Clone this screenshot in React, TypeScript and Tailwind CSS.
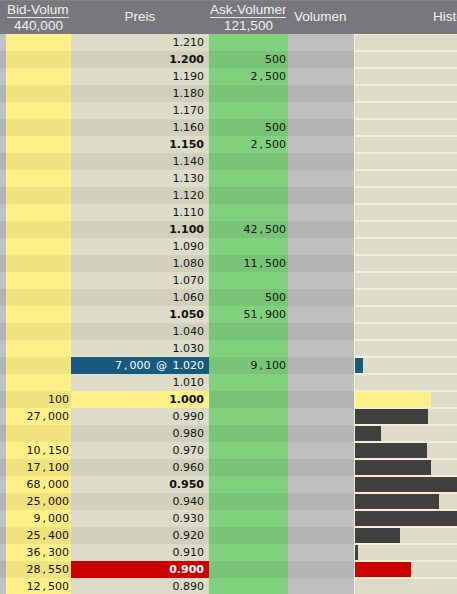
import React from 'react';

type Row = {
  price: string;
  bold?: boolean;
  bid?: string;
  ask?: string;
  hist?: number;
  histColor?: string;
  hi?: 'blue' | 'yellow' | 'red';
};

const rows: Row[] = [
  { price: '1.210' },
  { price: '1.200', bold: true, ask: '500' },
  { price: '1.190', ask: '2,500' },
  { price: '1.180' },
  { price: '1.170' },
  { price: '1.160', ask: '500' },
  { price: '1.150', bold: true, ask: '2,500' },
  { price: '1.140' },
  { price: '1.130' },
  { price: '1.120' },
  { price: '1.110' },
  { price: '1.100', bold: true, ask: '42,500' },
  { price: '1.090' },
  { price: '1.080', ask: '11,500' },
  { price: '1.070' },
  { price: '1.060', ask: '500' },
  { price: '1.050', bold: true, ask: '51,900' },
  { price: '1.040' },
  { price: '1.030' },
  { price: '1.020', hi: 'blue', ask: '9,100', hist: 8, histColor: 'bg-[#175a80]' },
  { price: '1.010' },
  { price: '1.000', bold: true, bid: '100', hi: 'yellow', hist: 76, histColor: 'bg-[#fff087]' },
  { price: '0.990', bid: '27,000', hist: 73 },
  { price: '0.980', hist: 26 },
  { price: '0.970', bid: '10,150', hist: 72 },
  { price: '0.960', bid: '17,100', hist: 76 },
  { price: '0.950', bold: true, bid: '68,000', hist: 102 },
  { price: '0.940', bid: '25,000', hist: 84 },
  { price: '0.930', bid: '9,000', hist: 102 },
  { price: '0.920', bid: '25,400', hist: 45 },
  { price: '0.910', bid: '36,300', hist: 3 },
  { price: '0.900', bold: true, bid: '28,550', hi: 'red', hist: 56, histColor: 'bg-[#cc0000]' },
  { price: '0.890', bid: '12,500' },
];

// Tausender-Komma ist in der Vorlage breiter als der Punkt
function Num({ value }: { value?: string }) {
  if (!value) return null;
  const [a, b] = value.split(',');
  if (b === undefined) return <>{value}</>;
  return (
    <>
      {a}
      <span className="mx-[2px]">,</span>
      {b}
    </>
  );
}

function HeaderSplit({ title, total, width }: { title: string; total: string; width: string }) {
  return (
    <div className={`${width} flex flex-col pl-px`}>
      <div className="h-[18px] mr-[2px] border-b border-[#e4e4e4] overflow-hidden whitespace-nowrap leading-[17px]">
        {title}
      </div>
      <div className="h-[16px] pr-px text-center leading-[15px]">{total}</div>
    </div>
  );
}

function PriceRow({ row, odd }: { row: Row; odd: boolean }) {
  let priceCls = odd ? 'bg-[#d0d0bc] text-[#111]' : 'bg-[#dcdcc8] text-[#111]';
  if (row.hi === 'blue') priceCls = 'bg-[#175a80] text-white';
  if (row.hi === 'yellow') priceCls = 'bg-[#fff087] text-[#111]';
  if (row.hi === 'red') priceCls = 'bg-[#cc0000] text-white';

  return (
    <div className="flex h-[17px] leading-[17px] text-[#111]">
      <div className={`w-[6px] ${odd ? 'bg-[#b4b4b4]' : 'bg-[#c0c0c0]'}`} />
      <div className={`w-[65px] pr-[2px] text-right whitespace-nowrap ${odd ? 'bg-[#f0e27f]' : 'bg-[#fff087]'}`}>
        <Num value={row.bid} />
      </div>
      <div className={`w-[138px] pr-[5px] text-right whitespace-nowrap ${priceCls} ${row.bold ? 'font-bold' : ''}`}>
        {row.hi === 'blue' ? (
          <>
            <Num value="7,000" />
            <span className="mx-[2px]"> @ </span>
            {row.price}
          </>
        ) : (
          row.price
        )}
      </div>
      <div className={`w-[79px] pr-[2px] text-right whitespace-nowrap ${odd ? 'bg-[#78c476]' : 'bg-[#80d07e]'}`}>
        <Num value={row.ask} />
      </div>
      <div className={`w-[66px] ${odd ? 'bg-[#b4b4b4]' : 'bg-[#c0c0c0]'}`} />
      <div className="w-px bg-[#f3efd3]" />
      <div className="w-[102px] border-y border-[#f3efd3] bg-[#dcdcc8]">
        {row.hist ? (
          <div className={`h-full ${row.histColor ?? 'bg-[#404040]'}`} style={{ width: row.hist }} />
        ) : null}
      </div>
    </div>
  );
}

export default function App() {
  return (
    <div
      className="w-[457px] h-[594px] overflow-hidden bg-[#dcdcc8] text-[11px]"
      style={{ fontFamily: '"DejaVu Sans", Verdana, sans-serif' }}
    >
      {/* Kopfzeile */}
      <div
        className="flex h-[34px] bg-[#78787c] text-[13.5px] text-[#f2f2f2] border-t border-[#838386]"
        style={{ fontFamily: '"Liberation Sans", Arial, sans-serif' }}
      >
        <div className="w-[6px]" />
        <HeaderSplit title="Bid-Volumen" total="440,000" width="w-[65px]" />
        <div className="w-[138px] flex items-center justify-center pb-[1px]">Preis</div>
        <HeaderSplit title="Ask-Volumen" total="121,500" width="w-[79px]" />
        <div className="w-[67px] flex items-center pl-[6px] pb-[1px]">Volumen</div>
        <div className="w-[102px] flex items-center pl-[78px] pb-[1px] overflow-hidden whitespace-nowrap">
          Histogramm
        </div>
      </div>

      {/* Orderbuch */}
      <div>
        {rows.map((row, i) => (
          <PriceRow key={row.price} row={row} odd={i % 2 === 1} />
        ))}
      </div>
    </div>
  );
}
